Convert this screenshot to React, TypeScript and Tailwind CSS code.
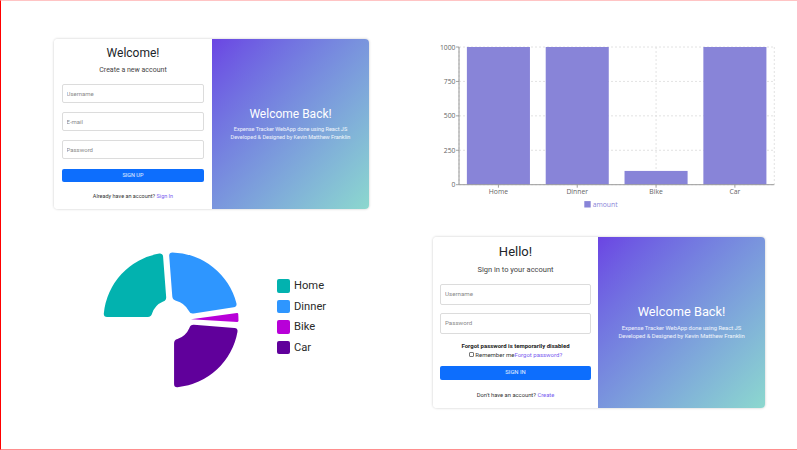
import React from "react";

// bar chart data
const expenses = [
  { name: "Home", amount: 1000 },
  { name: "Dinner", amount: 1000 },
  { name: "Bike", amount: 100 },
  { name: "Car", amount: 1000 },
];

const pieColors = ["#02B2AF", "#2E96FF", "#B800D8", "#60009B"];

// ---- pie geometry (page coordinates) ----
const CX = 171;
const CY = 319.5;
const R0 = 20;
const R1 = 67.5;
const PAD = 5;
const CORNER = 3.5;

type Pt = [number, number];

const toXY = (r: number, deg: number): Pt => {
  const a = (deg * Math.PI) / 180;
  return [CX + r * Math.sin(a), CY - r * Math.cos(a)];
};

const along = (p: Pt, q: Pt, dist: number): Pt => {
  const dx = q[0] - p[0];
  const dy = q[1] - p[1];
  const len = Math.hypot(dx, dy);
  return [p[0] + (dx * dist) / len, p[1] + (dy * dist) / len];
};

const f = (p: Pt) => `${p[0].toFixed(2)} ${p[1].toFixed(2)}`;
const deg = (rad: number) => (rad * 180) / Math.PI;

function sectorPath(a0: number, a1: number) {
  const rp = Math.sqrt(R0 * R0 + R1 * R1);
  const h = rp * Math.sin((PAD * Math.PI) / 360);
  const d1 = deg(Math.asin(h / R1));
  const d0 = deg(Math.asin(Math.min(1, h / R0)));
  const s1 = a0 + d1;
  const e1 = a1 - d1;
  const O0 = toXY(R1, s1);
  const O1 = toXY(R1, e1);

  if (a1 - a0 <= 2 * d0) {
    // thin slice: inner edge collapses into a point
    const T = toXY(R0, (a0 + a1) / 2);
    const c = 1.2;
    const cd = deg(c / R1);
    return `M${f(along(O0, T, c))} Q${f(O0)} ${f(toXY(R1, s1 + cd))} A${R1} ${R1} 0 0 1 ${f(
      toXY(R1, e1 - cd)
    )} Q${f(O1)} ${f(along(O1, T, c))} L${f(T)} Z`;
  }

  const c = CORNER;
  const s0 = a0 + d0;
  const e0 = a1 - d0;
  const I0 = toXY(R0, s0);
  const I1 = toXY(R0, e0);
  const cd1 = deg(c / R1);
  const cd0 = deg(c / R0);
  return [
    `M${f(along(O0, I0, c))}`,
    `Q${f(O0)} ${f(toXY(R1, s1 + cd1))}`,
    `A${R1} ${R1} 0 0 1 ${f(toXY(R1, e1 - cd1))}`,
    `Q${f(O1)} ${f(along(O1, I1, c))}`,
    `L${f(along(I1, O1, c))}`,
    `Q${f(I1)} ${f(toXY(R0, e0 - cd0))}`,
    `A${R0} ${R0} 0 0 0 ${f(toXY(R0, s0 + cd0))}`,
    `Q${f(I0)} ${f(along(I0, O0, c))}`,
    "Z",
  ].join(" ");
}

const PieChart = () => {
  const total = expenses.reduce((s, e) => s + e.amount, 0);
  const k = (270 - expenses.length * PAD) / total;
  let a = -90;
  const slices = expenses.map((e, i) => {
    const start = a;
    a = a + e.amount * k + PAD;
    return { d: sectorPath(start, a), color: pieColors[i] };
  });

  return (
    <svg width={150} height={150} viewBox="96 244.5 150 150" className="ml-[95px] mt-[19.5px] shrink-0">
      {slices.map((s, i) => (
        <path key={i} d={s.d} fill={s.color} />
      ))}
    </svg>
  );
};

const PieLegend = () => (
  <div className="ml-[30.5px] mt-[54.3px] flex flex-col gap-[7px]">
    {expenses.map((e, i) => (
      <div key={e.name} className="flex items-center gap-[4px]">
        <span className="w-[13.5px] h-[13.5px] rounded-[2px]" style={{ backgroundColor: pieColors[i] }} />
        <span className="text-[11.2px] leading-[13.5px] text-[#2b2b2b]">{e.name}</span>
      </div>
    ))}
  </div>
);

// ---- bar chart (page coordinates) ----
const BarChart = () => {
  const left = 459;
  const right = 774.3;
  const top = 47;
  const bottom = 184.7;
  const band = (right - left) / expenses.length;
  const yOf = (v: number) => bottom - (v / 1000) * (bottom - top);
  const ticks = [0, 250, 500, 750, 1000];
  const centers = expenses.map((_, i) => left + band * i + band / 2);
  const font = "'Open Sans', 'DejaVu Sans', sans-serif";

  return (
    <svg width={399} height={224} viewBox="398 1 399 224">
      {/* grid */}
      {ticks.map((t) => (
        <line key={t} x1={left} x2={right} y1={yOf(t)} y2={yOf(t)} stroke="#dadada" strokeDasharray="2 2" strokeWidth={0.8} />
      ))}
      {[left, ...centers, right].map((x, i) => (
        <line key={i} x1={x} x2={x} y1={top} y2={bottom} stroke="#dadada" strokeDasharray="2 2" strokeWidth={0.8} />
      ))}

      {/* bars */}
      {expenses.map((e, i) => (
        <rect
          key={e.name}
          x={left + band * i + band * 0.1}
          y={yOf(e.amount)}
          width={band * 0.8}
          height={bottom - yOf(e.amount)}
          fill="#8884d8"
        />
      ))}

      {/* axes */}
      <line x1={left} x2={left} y1={top} y2={bottom} stroke="#8a8a8a" strokeWidth={0.9} />
      <line x1={left} x2={right} y1={bottom} y2={bottom} stroke="#9a9a9a" strokeWidth={1} />

      {ticks.map((t) => (
        <g key={t}>
          <line x1={456} x2={left} y1={yOf(t)} y2={yOf(t)} stroke="#8a8a8a" strokeWidth={0.8} />
          <text x={455.5} y={yOf(t)} textAnchor="end" dominantBaseline="central" fontSize={6.8} fill="#666" fontFamily={font}>
            {t}
          </text>
        </g>
      ))}

      {expenses.map((e, i) => (
        <g key={e.name}>
          <line x1={centers[i]} x2={centers[i]} y1={bottom} y2={bottom + 3} stroke="#8a8a8a" strokeWidth={0.8} />
          <text x={centers[i]} y={191.3} textAnchor="middle" dominantBaseline="central" fontSize={6.8} fill="#666" fontFamily={font}>
            {e.name}
          </text>
        </g>
      ))}

      {/* legend */}
      <rect x={584.3} y={201.1} width={6.4} height={6.4} fill="#8884d8" />
      <text x={592.7} y={204.3} dominantBaseline="central" fontSize={6.8} fill="#8884d8" fontFamily={font}>
        amount
      </text>
    </svg>
  );
};

const inputTop = "h-[19.4px] w-full border border-[#dcdcdc] rounded-[2px] px-[3.5px] text-[6px] text-[#333] placeholder:text-[#8a8a8a] outline-none bg-white";
const inputBottom = "h-[20.4px] w-full border border-[#dcdcdc] rounded-[2px] px-[4px] text-[6.2px] text-[#333] placeholder:text-[#8a8a8a] outline-none bg-white";

const SignUpCard = () => (
  <div className="flex w-[315px] h-[170px] rounded-[4px] overflow-hidden shadow-[0_0_2px_1px_rgba(0,0,0,0.1)]">
    <div className="w-[158px] bg-white flex flex-col items-center px-[8px]">
      <h2 className="mt-[7px] text-[12px] leading-[14px] text-[#212529]">Welcome!</h2>
      <p className="mt-[6px] text-[7px] leading-[9px] text-[#444]">Create a new account</p>
      <div className="mt-[9px] w-full flex flex-col gap-[8.6px]">
        <input className={inputTop} placeholder="Username" />
        <input className={inputTop} placeholder="E-mail" />
        <input className={inputTop} placeholder="Password" type="password" />
      </div>
      <button className="mt-[9.6px] w-full h-[13.4px] rounded-[2px] bg-[#0d6efd] text-white/90 text-[5.5px] leading-none">
        SIGN UP
      </button>
      <p className="mt-[11px] text-[5.5px] leading-[7px] text-[#333]">
        Already have an account? <span className="text-[#7a5cf0]">Sign In</span>
      </p>
    </div>
    <div className="flex-1 bg-linear-to-br from-[#6b44e3] to-[#8cd8ce] flex flex-col items-center justify-center text-white text-center">
      <h2 className="text-[12px] leading-[14px]">Welcome Back!</h2>
      <p className="mt-[4.3px] text-[5.5px] leading-[8.3px] text-white/90">
        Expense Tracker WebApp done using React JS
        <br />
        Developed &amp; Designed by Kevin Matthew Franklin
      </p>
    </div>
  </div>
);

const SignInCard = () => (
  <div className="flex w-[332px] h-[171px] rounded-[4px] overflow-hidden shadow-[0_0_2px_1px_rgba(0,0,0,0.1)]">
    <div className="w-[165px] bg-white flex flex-col items-center px-[7px]">
      <h2 className="mt-[7px] text-[13px] leading-[15px] text-[#212529]">Hello!</h2>
      <p className="mt-[6px] text-[7.5px] leading-[9.5px] text-[#444]">Sign in to your account</p>
      <div className="mt-[9.8px] w-full flex flex-col gap-[8.6px]">
        <input className={inputBottom} placeholder="Username" />
        <input className={inputBottom} placeholder="Password" type="password" />
      </div>
      <p className="mt-[8.3px] text-[6px] leading-[7.5px] font-bold text-[#222]">Forgot password is temporarily disabled</p>
      <p className="mt-[1.5px] flex items-center text-[6px] leading-[7.5px] text-[#333]">
        <span className="inline-block w-[5px] h-[5px] mr-[1.5px] border-[0.6px] border-[#777] rounded-[1px]" />
        Remember me<span className="text-[#7a5cf0]">Forgot password?</span>
      </p>
      <button className="mt-[7.8px] w-full h-[13.7px] rounded-[2px] bg-[#0d6efd] text-white/90 text-[5.8px] leading-none">
        SIGN IN
      </button>
      <p className="mt-[12.2px] text-[5.8px] leading-[7.5px] text-[#333]">
        Don't have an account? <span className="text-[#7a5cf0]">Create</span>
      </p>
    </div>
    <div className="flex-1 bg-linear-to-br from-[#6b44e3] to-[#8cd8ce] flex flex-col items-center justify-center text-white text-center">
      <h2 className="text-[12.8px] leading-[15px]">Welcome Back!</h2>
      <p className="mt-[4.5px] text-[5.8px] leading-[8.6px] text-white/90">
        Expense Tracker WebApp done using React JS
        <br />
        Developed &amp; Designed by Kevin Matthew Franklin
      </p>
    </div>
  </div>
);

export default function App() {
  return (
    <div className="w-[797px] h-[450px] overflow-hidden bg-white border-l border-t border-b border-l-[#ff0000] border-t-[#ffc4c4] border-b-[#ff8d8d] font-['Roboto','Noto_Sans',sans-serif]">
      <div className="grid grid-cols-[397px_399px] grid-rows-[224px_224px]">
        <div className="pl-[53px] pt-[38px]">
          <SignUpCard />
        </div>
        <div>
          <BarChart />
        </div>
        <div className="flex items-start">
          <PieChart />
          <PieLegend />
        </div>
        <div className="pl-[35px] pt-[12px]">
          <SignInCard />
        </div>
      </div>
    </div>
  );
}
